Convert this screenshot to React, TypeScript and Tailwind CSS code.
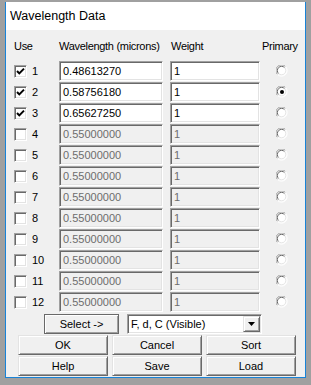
import React from "react";

const rows = [
  { n: 1, on: true, wl: "0.48613270", w: "1", primary: false },
  { n: 2, on: true, wl: "0.58756180", w: "1", primary: true },
  { n: 3, on: true, wl: "0.65627250", w: "1", primary: false },
  ...Array.from({ length: 9 }, (_, i) => ({ n: i + 4, on: false, wl: "0.55000000", w: "1", primary: false })),
];

const sunken =
  "border border-t-[#a0a0a0] border-l-[#a0a0a0] border-b-white border-r-white shadow-[inset_1px_1px_0_#696969,inset_-1px_-1px_0_#e3e3e3]";
const raised =
  "border border-t-[#e3e3e3] border-l-[#e3e3e3] border-b-[#696969] border-r-[#696969] shadow-[inset_1px_1px_0_#ffffff,inset_-1px_-1px_0_#a0a0a0] bg-[#f0f0f0]";

const Check = ({ on }: { on: boolean }) => (
  <div className={`w-[13px] h-[13px] bg-white ${sunken} flex items-center justify-center`}>
    {on && (
      <svg width="9" height="9" viewBox="0 0 9 9">
        <path d="M1 4 L3.3 6.4 L8 1.6" fill="none" stroke="#000" strokeWidth="2" />
      </svg>
    )}
  </div>
);

const Radio = ({ on }: { on: boolean }) => (
  <svg width="12" height="12" viewBox="0 0 12 12">
    <circle cx="6" cy="6" r="5" fill="#fff" />
    <path d="M1.5 9.5 A5.5 5.5 0 0 1 9.5 1.5" fill="none" stroke="#a0a0a0" strokeWidth="1" />
    <path d="M2.6 8.6 A4.2 4.2 0 0 1 8.6 2.6" fill="none" stroke="#696969" strokeWidth="1" />
    <path d="M9.5 1.5 A5.5 5.5 0 0 1 1.5 9.5" fill="none" stroke="#ffffff" strokeWidth="1" />
    <path d="M8.6 2.6 A4.2 4.2 0 0 1 2.6 8.6" fill="none" stroke="#e3e3e3" strokeWidth="1" />
    {on && <circle cx="6" cy="6" r="2" fill="#000" />}
  </svg>
);

const Btn = ({ label, className = "" }: { label: string; className?: string }) => (
  <div className={`h-[20px] flex items-center justify-center ${raised} ${className}`}>{label}</div>
);

export default function App() {
  return (
    <div
      className="w-[311px] h-[385px] bg-[#a0a0a0] pt-[2px] pl-[5px] text-[11px] text-black leading-[13px]"
      style={{ fontFamily: '"Liberation Sans", Arial, sans-serif' }}
    >
      <div className="w-[301px] h-[376px] border-x border-b border-[#1883d7] bg-[#f0f0f0] flex flex-col">
        <div className="h-[28px] bg-white flex items-center pl-[4px] text-[12.5px]">Wavelength Data</div>

        <div className="flex pl-[8px] mt-[10px] h-[13px] tracking-[-0.3px]">
          <span className="w-[45px]">Use</span>
          <span className="w-[112px]">Wavelength (microns)</span>
          <span className="w-[91px]">Weight</span>
          <span>Primary</span>
        </div>

        <div className="flex flex-col gap-[1px] mt-[8px] pl-[8px]">
          {rows.map((r) => (
            <div key={r.n} className="flex items-center h-[20px]">
              <Check on={r.on} />
              <span className="w-[32px] pl-[5px]">{r.n}</span>
              <div
                className={`w-[104px] h-[20px] flex items-center pl-[3px] ${sunken} ${
                  r.on ? "bg-white text-black" : "bg-[#f0f0f0] text-[#6d6d6d]"
                }`}
              >
                {r.wl}
              </div>
              <div
                className={`ml-[7px] w-[90px] h-[20px] flex items-center pl-[3px] ${sunken} ${
                  r.on ? "bg-white text-black" : "bg-[#f0f0f0] text-[#6d6d6d]"
                }`}
              >
                {r.w}
              </div>
              <div className="ml-[16px]">
                <Radio on={r.primary} />
              </div>
            </div>
          ))}
        </div>

        <div className="flex items-center mt-[2px] pl-[38px] gap-[8px]">
          <Btn label="Select ->" className="w-[75px] outline outline-1 outline-[#696969] -outline-offset-1" />
          <div className={`w-[135px] h-[20px] bg-white flex items-center ${sunken}`}>
            <span className="flex-1 pl-[3px]">F, d, C (Visible)</span>
            <div className={`w-[17px] h-[16px] mr-[1px] flex items-center justify-center ${raised}`}>
              <svg width="7" height="4" viewBox="0 0 7 4">
                <path d="M0 0 H7 L3.5 4 Z" fill="#000" />
              </svg>
            </div>
          </div>
        </div>

        <div className="flex flex-col gap-[1px] mt-[1px] pl-[12px]">
          <div className="flex gap-[4px]">
            <Btn label="OK" className="w-[90px]" />
            <Btn label="Cancel" className="w-[90px]" />
            <Btn label="Sort" className="w-[90px]" />
          </div>
          <div className="flex gap-[4px]">
            <Btn label="Help" className="w-[90px]" />
            <Btn label="Save" className="w-[90px]" />
            <Btn label="Load" className="w-[90px]" />
          </div>
        </div>
      </div>
    </div>
  );
}
